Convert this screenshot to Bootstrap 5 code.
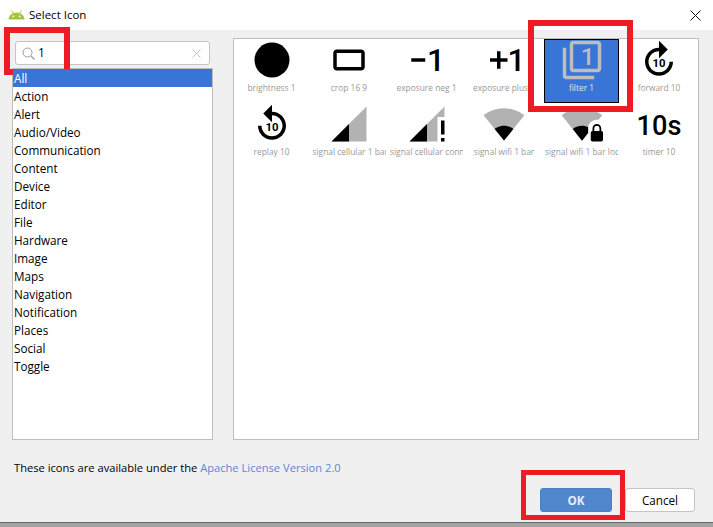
<!DOCTYPE html>
<html lang="en">
<head>
  <meta charset="utf-8">
  <title>Select Icon</title>
  <link href="https://cdn.jsdelivr.net/npm/bootstrap@5.3.3/dist/css/bootstrap.min.css" rel="stylesheet">
  <style>
    html, body { height: 527px; overflow: hidden; }
    body { background: #f0f0f0; font-family: "Open Sans", "Liberation Sans", sans-serif; font-size: 12px; color: #000; position: relative; }
    .title-strip { height: 30px; background: #fff; padding: 0 12px 0 8px; font-size: 11.5px; }
    .work-area { height: 402px; margin-top: 8px; padding: 0 14px 0 12px; gap: 20px; }
    .side-col { width: 201px; }
    .search-box { height: 24px; margin: 3px; background: #fff; border: 1px solid #c4c4c4; border-radius: 3px; padding: 0 8px 0 6px; }
    .search-box span { margin-left: 3px; }
    .icon-kinds { height: 372px; background: #fff; border: 1px solid #bdbdbd; border-radius: 0; }
    .icon-kinds .list-group-item { height: 18px; line-height: 19px; padding: 0 1px; border: 0; border-radius: 0; background: transparent; color: #000; font-size: 11.7px; }
    .icon-kinds .list-group-item.active { background: #3875d7; color: #fff; }
    .icon-panel { flex: 1; background: #fff; border: 1px solid #bdbdbd; }
    .icon-grid { display: grid; grid-template-columns: repeat(6, 75px); grid-auto-rows: 64px; column-gap: 2.5px; }
    .icon-cell { overflow: hidden; text-align: center; white-space: nowrap; color: #999; font-size: 8.4px; line-height: 12px; border: 1px solid transparent; }
    .icon-cell svg { display: block; margin: -1px auto 1px; width: 42px; height: 42px; overflow: visible; }
    .icon-cell text { font-family: Roboto, sans-serif; font-weight: 500; fill: #000; }
    .icon-cell.picked { background: #3875d7; border-color: #000; color: #e4e4e4; }
    .licence-line { margin: 20px 0 0 14px; line-height: 16px; height: 16px; font-size: 11.150px; }
    .licence-line a { color: #5c85d6; text-decoration: none; }
    .button-line { gap: 13px; margin: 12px 18px 0 0; }
    .button-line .btn { height: 24px; padding: 0; font-size: 11.7px; line-height: 22px; border-radius: 3px; }
    .ok-btn { width: 72px; background: #4f86cc; border-color: #4a80c6; color: #e8eef8; font-weight: 700; }
    .cancel-btn { width: 70px; background: #fff; border-color: #c4c4c4; color: #000; }
    .bottom-edge { position: absolute; left: 0; right: 0; top: 522px; height: 5px; background: #a3a3a3; border-top: 1px solid #666; }
    .red-frame { position: absolute; border-style: solid; border-color: #ed1c24; pointer-events: none; }
    .frame-search { left: 4px; top: 27px; width: 66px; height: 48px; border-width: 6px; }
    .frame-filter { left: 528px; top: 20px; width: 105px; height: 92px; border-width: 6px; }
    .frame-ok { left: 521px; top: 470px; width: 104px; height: 50px; border-width: 5px; }
  </style>
</head>
<body>

<!-- title bar -->
<div class="title-strip d-flex align-items-center">
  <svg width="17" height="10" viewBox="0 0 17 10" class="me-1">
    <path fill="#a4c639" d="M0.5 9.5C0.8 5.5 4 2.5 8.5 2.5s7.7 3 8 7z"/>
    <path stroke="#a4c639" stroke-width="1" d="M3.5 0.5L5.5 3.5M13.5 0.5L11.5 3.5"/>
    <circle cx="5.3" cy="6.3" r=".9" fill="#fff"/><circle cx="11.7" cy="6.3" r=".9" fill="#fff"/>
  </svg>
  <span>Select Icon</span>
  <svg width="11" height="11" viewBox="0 0 11 11" class="ms-auto">
    <path stroke="#111" stroke-width="1" d="M.5.5l10 10M10.5.5l-10 10"/>
  </svg>
</div>

<div class="work-area d-flex">
  <div class="side-col">
    <div class="search-box d-flex align-items-center">
      <svg width="13" height="13" viewBox="0 0 13 13" class="flex-shrink-0">
        <circle cx="5.5" cy="5.5" r="4.5" fill="none" stroke="#9a9aa2"/>
        <path stroke="#9a9aa2" stroke-width="1.3" d="M9 9l3.5 3.500"/>
      </svg>
      <span>1</span>
      <svg width="9" height="9" viewBox="0 0 9 9" class="ms-auto">
        <path stroke="#c4c4c4" d="M.5.5l8 8M8.5.5l-8 8"/>
      </svg>
    </div>
    <div class="list-group icon-kinds">
      <div class="list-group-item active">All</div>
      <div class="list-group-item">Action</div>
      <div class="list-group-item">Alert</div>
      <div class="list-group-item">Audio/Video</div>
      <div class="list-group-item">Communication</div>
      <div class="list-group-item">Content</div>
      <div class="list-group-item">Device</div>
      <div class="list-group-item">Editor</div>
      <div class="list-group-item">File</div>
      <div class="list-group-item">Hardware</div>
      <div class="list-group-item">Image</div>
      <div class="list-group-item">Maps</div>
      <div class="list-group-item">Navigation</div>
      <div class="list-group-item">Notification</div>
      <div class="list-group-item">Places</div>
      <div class="list-group-item">Social</div>
      <div class="list-group-item">Toggle</div>
    </div>
  </div>

  <div class="icon-panel">
    <div class="icon-grid">
      <div class="icon-cell">
        <svg viewBox="0 0 24 24"><circle cx="12" cy="12" r="10"/></svg>
        brightness 1
      </div>
      <div class="icon-cell">
        <svg viewBox="0 0 24 24"><path d="M19 6H5c-1.100 0-2 .9-2 2v8c0 1.100.9 2 2 2h14c1.100 0 2-.9 2-2V8c0-1.100-.9-2-2-2zm0 10H5V8h14v8z"/></svg>
        crop 16 9
      </div>
      <div class="icon-cell">
        <svg viewBox="0 0 24 24"><path d="M3 11v2h8v-2H3z"/><text x="12" y="18" font-size="18">1</text></svg>
        exposure neg 1
      </div>
      <div class="icon-cell">
        <svg viewBox="0 0 24 24"><path d="M10 7H8v4H4v2h4v4h2v-4h4v-2h-4V7z"/><text x="14" y="18" font-size="18">1</text></svg>
        exposure plus 1
      </div>
      <div class="icon-cell picked">
        <svg viewBox="0 0 24 24"><path fill="#bdbdbd" d="M3 5H1v16c0 1.100.9 2 2 2h16v-2H3V5zm18-4H7c-1.100 0-2 .9-2 2v14c0 1.100.9 2 2 2h14c1.100 0 2-.9 2-2V3c0-1.100-.9-2-2-2zm0 16H7V3h14v14z"/><text x="11.300" y="15" font-size="14" style="fill:#bdbdbd">1</text></svg>
        filter 1
      </div>
      <div class="icon-cell">
        <svg viewBox="0 0 24 24"><path d="M4 13c0 4.400 3.600 8 8 8s8-3.600 8-8h-2c0 3.300-2.700 6-6 6s-6-2.700-6-6 2.700-6 6-6v4l5-5-5-5v4c-4.400 0-8 3.600-8 8z"/><text x="12" y="16" font-size="6.500" text-anchor="middle" style="font-weight:700">10</text></svg>
        forward 10
      </div>
      <div class="icon-cell">
        <svg viewBox="0 0 24 24"><path d="M12 5V1L7 6l5 5V7c3.300 0 6 2.700 6 6s-2.700 6-6 6-6-2.700-6-6H4c0 4.400 3.600 8 8 8s8-3.600 8-8-3.600-8-8-8z"/><text x="12" y="16" font-size="6.500" text-anchor="middle" style="font-weight:700">10</text></svg>
        replay 10
      </div>
      <div class="icon-cell">
        <svg viewBox="0 0 24 24"><path fill-opacity=".3" d="M2 22h20V2z"/><path d="M12 12L2 22h10z"/></svg>
        signal cellular 1 bar
      </div>
      <div class="icon-cell">
        <svg viewBox="0 0 24 24"><path fill-opacity=".3" d="M22 8V2L2 22h16V8z"/><path d="M12 22V12L2 22h10zm8-12v8h2v-8h-2zm0 12h2v-2h-2v2z"/></svg>
        signal cellular connected no internet 1 bar
      </div>
      <div class="icon-cell">
        <svg viewBox="0 0 24 24"><path fill-opacity=".3" d="M12.010 21.490L23.640 7c-.45-.34-4.930-4-11.640-4C5.280 3 .81 6.660.36 7l11.640 14.500.01-.01z"/><path d="M6.670 14.860L12 21.490v.01l.01-.01 5.330-6.630C17.060 14.650 15.030 13 12 13s-5.060 1.650-5.330 1.860z"/></svg>
        signal wifi 1 bar
      </div>
      <div class="icon-cell">
        <svg viewBox="0 0 24 24"><path d="M23 16v-1.500c0-1.400-1.100-2.500-2.500-2.500S18 13.100 18 14.500V16c-.5 0-1 .5-1 1v4c0 .5.5 1 1 1h5c.5 0 1-.5 1-1v-4c0-.5-.5-1-1-1zm-1 0h-3v-1.500c0-.8.7-1.500 1.500-1.500s1.500.7 1.500 1.500V16z"/><path opacity=".3" d="M15.500 14.500c0-2.800 2.200-5 5-5 .4 0 .7 0 1 .1L23.600 7c-.4-.3-4.900-4-11.600-4C5.300 3 .8 6.700.4 7L12 21.500l3.500-4.300v-2.700z"/><path d="M6.700 14.900l5.300 6.600 3.500-4.300v-2.600c0-.2 0-.5.1-.7-.9-.5-2.200-.9-3.600-.9-3 0-5.100 1.700-5.300 1.900z"/></svg>
        signal wifi 1 bar lock
      </div>
      <div class="icon-cell">
        <svg viewBox="0 0 24 24"><text x="12" y="18" font-size="15.500" text-anchor="middle">10s</text></svg>
        timer 10
      </div>
    </div>
  </div>
</div>

<div class="licence-line">These icons are available under the <a href="#">Apache License Version 2.0</a></div>

<div class="button-line d-flex justify-content-end">
  <button type="button" class="btn ok-btn">OK</button>
  <button type="button" class="btn cancel-btn">Cancel</button>
</div>

<div class="bottom-edge"></div>

<!-- annotation frames drawn over the dialog -->
<div class="red-frame frame-search"></div>
<div class="red-frame frame-filter"></div>
<div class="red-frame frame-ok"></div>

<script src="https://cdn.jsdelivr.net/npm/bootstrap@5.3.3/dist/js/bootstrap.bundle.min.js"></script>
</body>
</html>
